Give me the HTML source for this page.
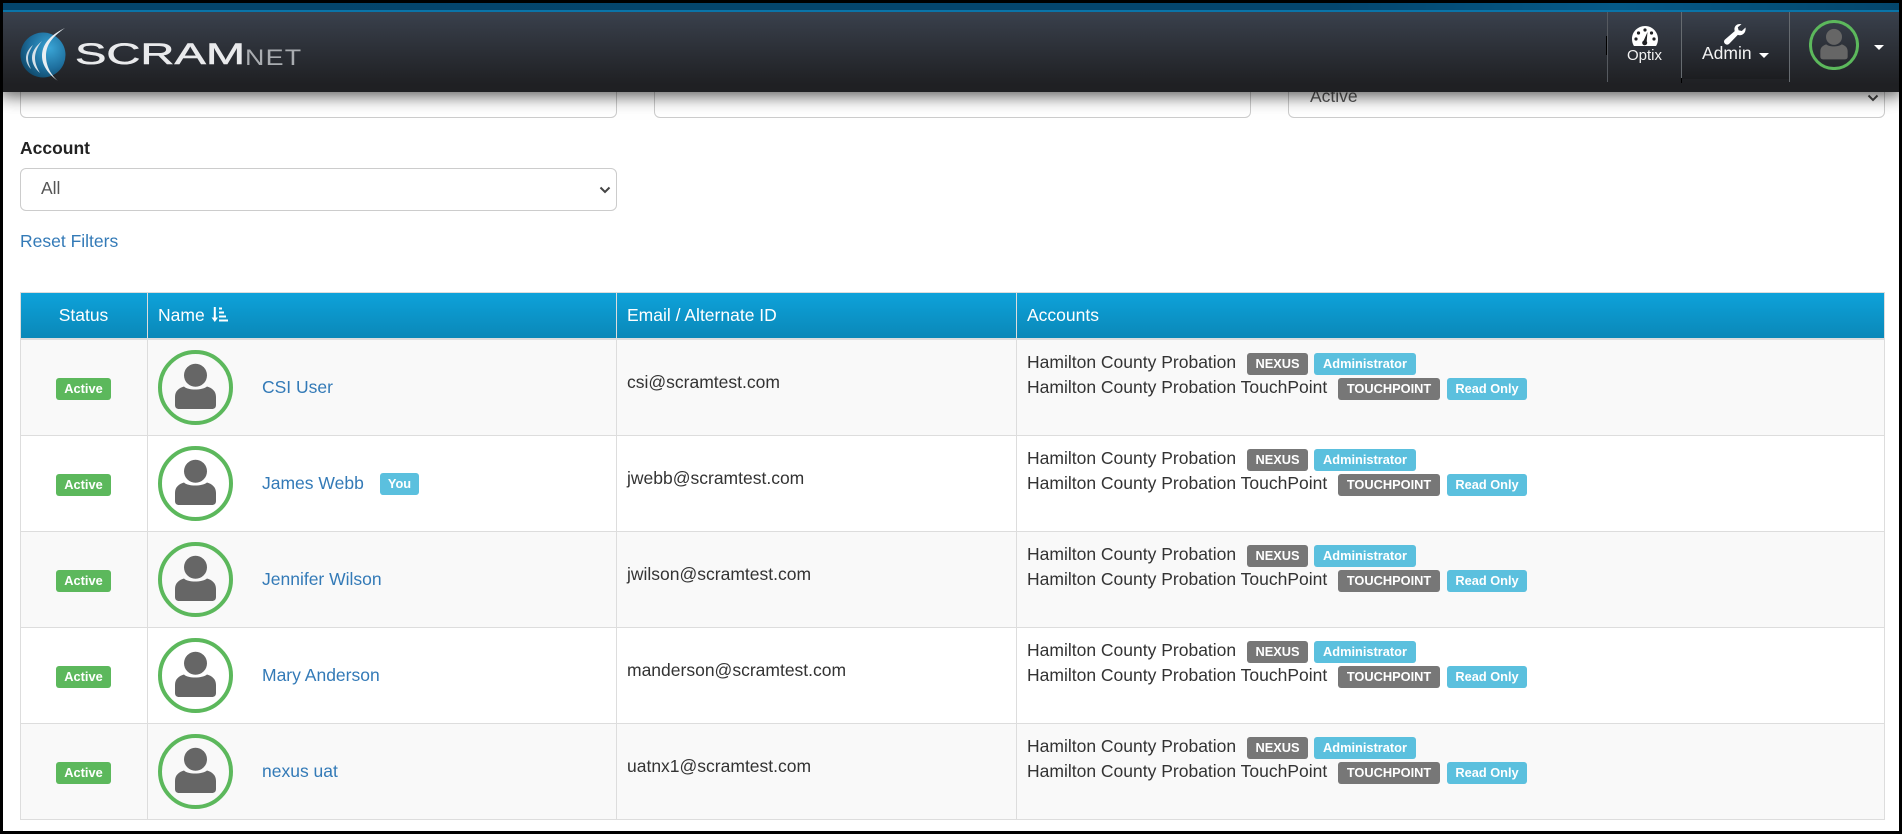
<!DOCTYPE html>
<html><head><meta charset="utf-8"><title>SCRAMNet</title>
<style>
*{box-sizing:border-box}
html,body{margin:0;padding:0;width:1902px;height:834px;overflow:hidden;background:#000;font-family:"Liberation Sans",Arial,sans-serif;font-size:17.5px;color:#333}
#page{position:absolute;left:3px;top:3px;width:1896px;height:828px;background:#fff;overflow:hidden}
.a{position:absolute;white-space:nowrap}
#wrap{position:absolute;left:-3px;top:-3px;width:1902px;height:834px}
.field{position:absolute;background:#fff;border:1px solid #ccc;border-radius:6px}
.chev{position:absolute}
.hd{position:absolute;left:20px;top:292px;width:1865px;height:48px;background:linear-gradient(#0ea2da,#0a88b8);border-top:1px solid #ddd;border-left:1px solid #ddd;border-right:1px solid #ddd;border-bottom:2px solid #ddd}
.vl{position:absolute;width:1px;background:#ddd}
.row{position:absolute;left:20px;width:1865px;height:97px;border:1px solid #ddd;border-top:1px solid #ddd}
.odd{background:#f9f9f9}.even{background:#fff}
.lb{position:absolute;height:22px;line-height:21px;border-radius:3px;color:#fff;font-weight:bold;font-size:12.8px;text-align:center;white-space:nowrap}
.g{background:#5cb85c}.b{background:#5bc0de}.d{background:#777}
.lnk{color:#337ab7}
.th{position:absolute;color:#fff;font-size:17.5px;top:305px;line-height:20px;white-space:nowrap}
.sep{position:absolute;top:12px;width:1px;height:70px;background:#565a60}
</style></head><body>
<div id="page"><div id="wrap">

<!-- fields -->
<div class="field" style="left:20px;top:70px;width:597px;height:48px"></div>
<div class="field" style="left:654px;top:70px;width:597px;height:48px"></div>
<div class="field" style="left:1288px;top:70px;width:597px;height:48px"></div>
<div class="a" style="left:1310px;top:86px;line-height:20px;color:#555">Active</div>
<svg class="chev" style="left:1867px;top:94px" width="12" height="8" viewBox="0 0 12 8"><path d="M1.5 1.5L6 6l4.500-4.500" fill="none" stroke="#444" stroke-width="2"/></svg>

<div class="a" style="left:20px;top:138px;line-height:20px;font-weight:bold;color:#222">Account</div>
<div class="field" style="left:20px;top:168px;width:597px;height:43px"></div>
<div class="a" style="left:41px;top:178px;line-height:20px;color:#555">All</div>
<svg class="chev" style="left:599px;top:186px" width="12" height="8" viewBox="0 0 12 8"><path d="M1.500 1.500L6 6l4.500-4.500" fill="none" stroke="#444" stroke-width="2"/></svg>
<div class="a lnk" style="left:20px;top:231px;line-height:20px">Reset Filters</div>

<!-- table header -->
<div class="hd"></div>
<div class="th" style="left:20px;width:127px;text-align:center">Status</div>
<div class="th" style="left:158px">Name</div>
<svg class="a" style="left:211px;top:306px" width="17" height="17" viewBox="0 0 17 17" fill="#fff"><path d="M2.800 1h2v10.500h2.200L3.800 16 .6 11.500h2.200z"/><rect x="8" y="1.500" width="3" height="2"/><rect x="8" y="5.500" width="5" height="2"/><rect x="8" y="9.500" width="7" height="2"/><rect x="8" y="13.500" width="9" height="2"/></svg>
<div class="th" style="left:627px">Email / Alternate ID</div>
<div class="th" style="left:1027px">Accounts</div>

<!-- rows -->
<div class="row odd" style="top:339px"></div>
<div class="row even" style="top:435px"></div>
<div class="row odd" style="top:531px"></div>
<div class="row even" style="top:627px"></div>
<div class="row odd" style="top:723px"></div>
<div class="vl" style="left:147px;top:292px;height:527px"></div>
<div class="vl" style="left:616px;top:292px;height:527px"></div>
<div class="vl" style="left:1016px;top:292px;height:527px"></div>

<!-- Row 1 -->
<div class="lb g" style="left:56px;top:378px;width:55px">Active</div>
<svg class="a" style="left:158px;top:350px" width="75" height="75" viewBox="0 0 75 75"><circle cx="37.500" cy="37.500" r="35.500" fill="none" stroke="#5cb85c" stroke-width="4"/><circle cx="37.500" cy="25.300" r="11.500" fill="#666"/><path d="M17 47C17 41 21 38 26 36.500C30 40.500 44 40.500 49 36.500C54 38 58 41 58 47V55C58 58 56 59 54 59H21C19 59 17 58 17 55Z" fill="#666"/></svg>
<div class="a lnk" style="left:262px;top:377px;line-height:20px">CSI User</div>
<div class="a" style="left:627px;top:372px;line-height:20px">csi@scramtest.com</div>
<div class="a" style="left:1027px;top:352px;line-height:20px">Hamilton County Probation</div>
<div class="a" style="left:1027px;top:377px;line-height:20px">Hamilton County Probation TouchPoint</div>
<div class="lb d" style="left:1247px;top:353px;width:61px">NEXUS</div>
<div class="lb b" style="left:1314px;top:353px;width:102px">Administrator</div>
<div class="lb d" style="left:1338px;top:378px;width:102px">TOUCHPOINT</div>
<div class="lb b" style="left:1447px;top:378px;width:80px">Read Only</div>

<!-- Row 2 -->
<div class="lb g" style="left:56px;top:474px;width:55px">Active</div>
<svg class="a" style="left:158px;top:446px" width="75" height="75" viewBox="0 0 75 75"><circle cx="37.500" cy="37.500" r="35.500" fill="none" stroke="#5cb85c" stroke-width="4"/><circle cx="37.500" cy="25.300" r="11.500" fill="#666"/><path d="M17 47C17 41 21 38 26 36.500C30 40.500 44 40.500 49 36.500C54 38 58 41 58 47V55C58 58 56 59 54 59H21C19 59 17 58 17 55Z" fill="#666"/></svg>
<div class="a lnk" style="left:262px;top:473px;line-height:20px">James Webb</div>
<div class="lb b" style="left:380px;top:473px;width:39px">You</div>
<div class="a" style="left:627px;top:468px;line-height:20px">jwebb@scramtest.com</div>
<div class="a" style="left:1027px;top:448px;line-height:20px">Hamilton County Probation</div>
<div class="a" style="left:1027px;top:473px;line-height:20px">Hamilton County Probation TouchPoint</div>
<div class="lb d" style="left:1247px;top:449px;width:61px">NEXUS</div>
<div class="lb b" style="left:1314px;top:449px;width:102px">Administrator</div>
<div class="lb d" style="left:1338px;top:474px;width:102px">TOUCHPOINT</div>
<div class="lb b" style="left:1447px;top:474px;width:80px">Read Only</div>

<!-- Row 3 -->
<div class="lb g" style="left:56px;top:570px;width:55px">Active</div>
<svg class="a" style="left:158px;top:542px" width="75" height="75" viewBox="0 0 75 75"><circle cx="37.500" cy="37.500" r="35.500" fill="none" stroke="#5cb85c" stroke-width="4"/><circle cx="37.500" cy="25.300" r="11.500" fill="#666"/><path d="M17 47C17 41 21 38 26 36.500C30 40.500 44 40.500 49 36.500C54 38 58 41 58 47V55C58 58 56 59 54 59H21C19 59 17 58 17 55Z" fill="#666"/></svg>
<div class="a lnk" style="left:262px;top:569px;line-height:20px">Jennifer Wilson</div>
<div class="a" style="left:627px;top:564px;line-height:20px">jwilson@scramtest.com</div>
<div class="a" style="left:1027px;top:544px;line-height:20px">Hamilton County Probation</div>
<div class="a" style="left:1027px;top:569px;line-height:20px">Hamilton County Probation TouchPoint</div>
<div class="lb d" style="left:1247px;top:545px;width:61px">NEXUS</div>
<div class="lb b" style="left:1314px;top:545px;width:102px">Administrator</div>
<div class="lb d" style="left:1338px;top:570px;width:102px">TOUCHPOINT</div>
<div class="lb b" style="left:1447px;top:570px;width:80px">Read Only</div>

<!-- Row 4 -->
<div class="lb g" style="left:56px;top:666px;width:55px">Active</div>
<svg class="a" style="left:158px;top:638px" width="75" height="75" viewBox="0 0 75 75"><circle cx="37.500" cy="37.500" r="35.500" fill="none" stroke="#5cb85c" stroke-width="4"/><circle cx="37.500" cy="25.300" r="11.500" fill="#666"/><path d="M17 47C17 41 21 38 26 36.500C30 40.500 44 40.500 49 36.500C54 38 58 41 58 47V55C58 58 56 59 54 59H21C19 59 17 58 17 55Z" fill="#666"/></svg>
<div class="a lnk" style="left:262px;top:665px;line-height:20px">Mary Anderson</div>
<div class="a" style="left:627px;top:660px;line-height:20px">manderson@scramtest.com</div>
<div class="a" style="left:1027px;top:640px;line-height:20px">Hamilton County Probation</div>
<div class="a" style="left:1027px;top:665px;line-height:20px">Hamilton County Probation TouchPoint</div>
<div class="lb d" style="left:1247px;top:641px;width:61px">NEXUS</div>
<div class="lb b" style="left:1314px;top:641px;width:102px">Administrator</div>
<div class="lb d" style="left:1338px;top:666px;width:102px">TOUCHPOINT</div>
<div class="lb b" style="left:1447px;top:666px;width:80px">Read Only</div>

<!-- Row 5 -->
<div class="lb g" style="left:56px;top:762px;width:55px">Active</div>
<svg class="a" style="left:158px;top:734px" width="75" height="75" viewBox="0 0 75 75"><circle cx="37.500" cy="37.500" r="35.500" fill="none" stroke="#5cb85c" stroke-width="4"/><circle cx="37.500" cy="25.300" r="11.500" fill="#666"/><path d="M17 47C17 41 21 38 26 36.500C30 40.500 44 40.500 49 36.500C54 38 58 41 58 47V55C58 58 56 59 54 59H21C19 59 17 58 17 55Z" fill="#666"/></svg>
<div class="a lnk" style="left:262px;top:761px;line-height:20px">nexus uat</div>
<div class="a" style="left:627px;top:756px;line-height:20px">uatnx1@scramtest.com</div>
<div class="a" style="left:1027px;top:736px;line-height:20px">Hamilton County Probation</div>
<div class="a" style="left:1027px;top:761px;line-height:20px">Hamilton County Probation TouchPoint</div>
<div class="lb d" style="left:1247px;top:737px;width:61px">NEXUS</div>
<div class="lb b" style="left:1314px;top:737px;width:102px">Administrator</div>
<div class="lb d" style="left:1338px;top:762px;width:102px">TOUCHPOINT</div>
<div class="lb b" style="left:1447px;top:762px;width:80px">Read Only</div>

<!-- navbar -->
<div style="position:absolute;left:0;top:0;width:1902px;height:92px;background:linear-gradient(#3a414d 12%,#1f2023 92%);box-shadow:0 4px 16px rgba(0,0,0,.65)"></div>
<div style="position:absolute;left:0;top:3px;width:1902px;height:7px;background:linear-gradient(90deg,#04456c,#04466e 70%,#055a88 85%,#04466c)"></div>
<div style="position:absolute;left:0;top:10px;width:1902px;height:2px;background:#0a74a8"></div>

<svg class="a" style="left:18px;top:28px" width="50" height="54" viewBox="0 0 50 54">
<defs><radialGradient id="gl" cx="65%" cy="35%" r="75%"><stop offset="0" stop-color="#3aa5d6"/><stop offset=".6" stop-color="#1e6f9e"/><stop offset="1" stop-color="#0f4565"/></radialGradient></defs>
<circle cx="25" cy="27" r="22.500" fill="url(#gl)"/>
<path d="M47 0C30 8 24 18 24 28c0 9 6 18 16 25C33 47 28 38 28 28 28 17 34 9 47 0z" fill="#e9eef2"/>
<path d="M24 13c-7 6-10 11-10 17 0 5 3 11 8 15-3-5-5-10-5-15s2-11 7-17z" fill="#d7e2ea"/>
<path d="M15 17c-5 4-7 9-7 13 0 4 2 8 5 11-2-4-3-7-3-11s2-8 5-13z" fill="#c9d8e2"/>
</svg>
<div class="a" style="left:75px;top:38px;font-size:30px;line-height:34px;color:#e9eaec;-webkit-text-stroke:.5px #e9eaec;transform:scaleX(1.57);transform-origin:left top">SCRAM</div>
<div class="a" style="left:245px;top:45px;font-size:22px;line-height:26px;color:#a9acb0;letter-spacing:1px;transform:scaleX(1.22);transform-origin:left top">NET</div>

<div class="sep" style="left:1607px"></div>
<div style="position:absolute;left:1606px;top:36px;width:1px;height:19px;background:#000"></div>
<div style="position:absolute;left:1682px;top:12px;width:107px;height:67px;background:linear-gradient(#3a414d,#1c1d20)"></div>
<div class="sep" style="left:1681px;background:#666b70"></div>
<div style="position:absolute;left:1681px;top:78px;width:1px;height:5px;background:#000"></div>
<div class="sep" style="left:1789px;background:#666b70"></div>

<!-- Optix -->
<svg class="a" style="left:1632px;top:26px" width="26" height="20" viewBox="0 0 26 20"><path d="M13 0C5.800 0 0 5.800 0 13c0 2.200.500 4.300 1.500 6.200.2.500.7.800 1.300.8h20.400c.6 0 1.100-.3 1.300-.8 1-1.900 1.500-4 1.500-6.200C26 5.800 20.200 0 13 0z" fill="#fff"/><circle cx="13" cy="4" r="1.600" fill="#1f2023"/><circle cx="6.500" cy="7" r="1.600" fill="#1f2023"/><circle cx="19.500" cy="7" r="1.600" fill="#1f2023"/><circle cx="4" cy="13" r="1.600" fill="#1f2023"/><circle cx="22" cy="13" r="1.600" fill="#1f2023"/><path d="M15.500 6l-3.800 8.500a2.500 2.500 0 1 0 3 .8z" fill="#1f2023"/></svg>
<div class="a" style="left:1607px;width:75px;text-align:center;top:48px;line-height:16px;font-size:15px;color:#f2f2f2">Optix</div>

<!-- Admin -->
<svg class="a" style="left:1724px;top:24px" width="23" height="21" viewBox="0 0 23 21"><path d="M21.500 3.500l-3.700 3.500-3.200-.8-.8-3L17.500.3c-3-1-6.500.8-7 4-.2 1 0 2 .2 2.800L1 15.500c-1.300 1.200-1.300 3 0 4.200s3 1.200 4.200 0l8.600-8.800c1 .3 2 .4 3 .2 3.200-.5 5.400-4 4.700-7.600z" fill="#fff"/></svg>
<div class="a" style="left:1702px;top:43px;line-height:20px;font-size:17.5px;color:#f2f2f2">Admin</div>
<div class="a" style="left:1759px;top:53px;width:0;height:0;border-left:5px solid transparent;border-right:5px solid transparent;border-top:5px solid #fff"></div>

<!-- User avatar -->
<svg class="a" style="left:1809px;top:20px" width="50" height="50" viewBox="0 0 75 75"><circle cx="37.500" cy="37.500" r="35.300" fill="none" stroke="#5cb85c" stroke-width="4.500"/><circle cx="37.500" cy="25.300" r="12" fill="#666"/><path d="M17 47C17 41 21 38 26 36.500C30 40.500 44 40.500 49 36.500C54 38 58 41 58 47V55C58 58 56 59 54 59H21C19 59 17 58 17 55Z" fill="#666"/></svg>
<div class="a" style="left:1874px;top:45px;width:0;height:0;border-left:5px solid transparent;border-right:5px solid transparent;border-top:5px solid #fff"></div>
</div></div>
</body></html>
